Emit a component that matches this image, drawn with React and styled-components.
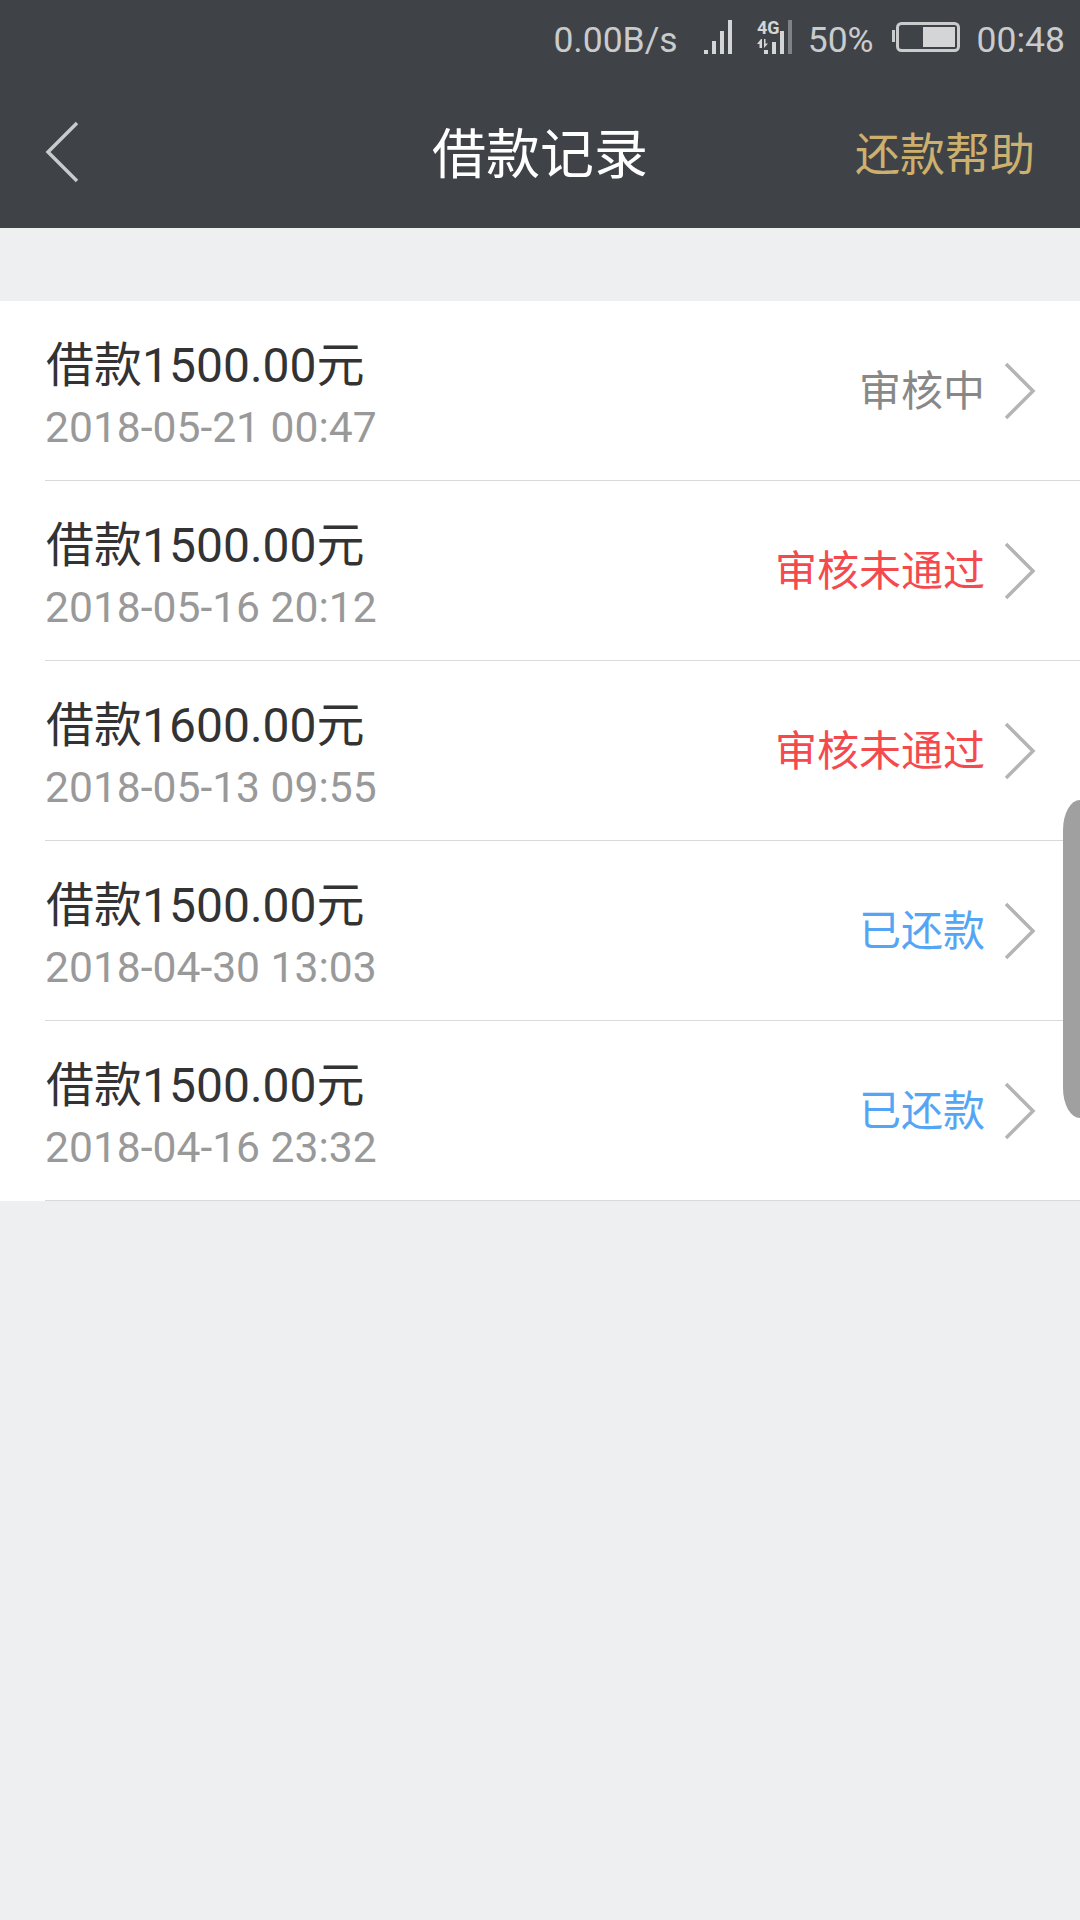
import React from "react";
import styled, { createGlobalStyle } from "styled-components";

const Global = createGlobalStyle`
  html, body { margin: 0; padding: 0; background: #eeeff1; }
  * { box-sizing: border-box; }
`;

const Page = styled.div`
  position: relative;
  width: 1080px;
  height: 1920px;
  overflow: hidden;
  background: #eeeff1;
  font-family: Roboto, "Noto Sans CJK SC", sans-serif;
`;

const Header = styled.header`
  height: 228px;
  background: #3f4347;
`;

const StatusBar = styled.div`
  height: 72px;
  padding: 20px 15px 0 0;
  display: flex;
  justify-content: flex-end;
  align-items: flex-start;
  color: #c9cbcd;
  font-size: 35.5px;
  line-height: 40px;
`;

const StatusText = styled.span`
  margin-left: ${(p) => p.$gap || 0}px;
`;

const StatusIcon = styled.svg`
  display: block;
  flex: none;
  overflow: visible;
  margin-left: ${(p) => p.$gap}px;
`;

const Nav = styled.nav`
  height: 156px;
  padding: 11px 45px 0;
  display: grid;
  grid-template-columns: 1fr auto 1fr;
  align-items: center;
`;

const BackIcon = styled.svg`
  display: block;
  margin-top: -7px;
`;

const Title = styled.h1`
  margin: 0;
  font-size: 54px;
  font-weight: 400;
  line-height: 64px;
  color: #fff;
`;

const HelpLink = styled.a`
  justify-self: end;
  font-size: 45px;
  line-height: 64px;
  color: #cdb06d;
`;

const List = styled.ul`
  list-style: none;
  margin: 73px 0 0;
  padding: 0;
  background: #fff;
`;

const Row = styled.li`
  height: 180px;
  margin-left: 45px;
  padding-right: 44px;
  border-bottom: 1px solid #d8d9da;
  display: flex;
  align-items: center;
`;

const Info = styled.div`
  flex: 1;
  margin-top: 6px;
`;

const Amount = styled.div`
  font-size: 48px;
  line-height: 60px;
  color: #333;
  margin-left: 1px;
`;

const DateText = styled.div`
  margin-top: 6px;
  font-size: 42.6px;
  line-height: 50px;
  color: #999;
`;

const STATUS = { pending: "#888", rejected: "#f44a4e", repaid: "#55a5f5" };

const Status = styled.span`
  font-size: 42px;
  line-height: 50px;
  margin: 2px 19px 0 0;
  color: ${(p) => STATUS[p.$kind]};
`;

const Chevron = styled.svg`
  display: block;
  flex: none;
`;

const EdgeHandle = styled.div`
  position: absolute;
  right: 0;
  top: 800px;
  width: 17px;
  height: 318px;
  background: #a0a0a0;
  border-radius: 17px 0 0 17px / 30px 0 0 30px;
`;

const records = [
  { amount: "借款1500.00元", date: "2018-05-21 00:47", status: "审核中", kind: "pending" },
  { amount: "借款1500.00元", date: "2018-05-16 20:12", status: "审核未通过", kind: "rejected" },
  { amount: "借款1600.00元", date: "2018-05-13 09:55", status: "审核未通过", kind: "rejected" },
  { amount: "借款1500.00元", date: "2018-04-30 13:03", status: "已还款", kind: "repaid" },
  { amount: "借款1500.00元", date: "2018-04-16 23:32", status: "已还款", kind: "repaid" },
];

const SignalIcon = () => (
  <StatusIcon $gap={26} width="29" height="34" viewBox="0 0 29 34" fill="#d3d5d7">
    <rect x="0" y="30" width="4" height="4" />
    <rect x="8" y="21" width="4" height="13" />
    <rect x="16" y="11" width="4" height="23" />
    <rect x="24" y="0" width="4" height="34" />
  </StatusIcon>
);

const MobileIcon = () => (
  <StatusIcon $gap={24} width="36" height="34" viewBox="0 0 36 34" fill="#d3d5d7">
    <text x="0" y="14" fontFamily="Roboto, sans-serif" fontSize="18" fontWeight="700" fill="#d3d5d7">4G</text>
    <path d="M4 19 L0 24 H2.5 V28 H5 V19 Z M7 19 V28 L11 23.5 H8.5 V19 Z" />
    <rect x="7" y="30" width="4" height="4" />
    <rect x="15" y="22" width="4" height="12" />
    <rect x="23" y="11" width="4" height="23" />
    <rect x="31" y="0" width="4" height="34" fill="#7f8386" />
  </StatusIcon>
);

const BatteryIcon = () => (
  <StatusIcon $gap={18} width="68" height="36" viewBox="0 0 68 36">
    <rect x="0" y="10" width="3" height="12" fill="#c9cbcd" />
    <rect x="5.5" y="3.5" width="61" height="27" rx="4" fill="none" stroke="#c9cbcd" strokeWidth="3" />
    <rect x="31" y="7" width="32" height="20" fill="#d3d5d7" />
  </StatusIcon>
);

export default function App() {
  return (
    <Page>
      <Global />
      <Header>
        <StatusBar>
          <StatusText>0.00B/s</StatusText>
          <SignalIcon />
          <MobileIcon />
          <StatusText $gap={15}>50%</StatusText>
          <BatteryIcon />
          <StatusText $gap={17}>00:48</StatusText>
        </StatusBar>
        <Nav>
          <BackIcon width="34" height="62" viewBox="0 0 34 62" fill="none">
            <path d="M32 2 L3 31 L32 60" stroke="#c8cacc" strokeWidth="3.5" />
          </BackIcon>
          <Title>借款记录</Title>
          <HelpLink>还款帮助</HelpLink>
        </Nav>
      </Header>
      <List>
        {records.map((r) => (
          <Row key={r.date}>
            <Info>
              <Amount>{r.amount}</Amount>
              <DateText>{r.date}</DateText>
            </Info>
            <Status $kind={r.kind}>{r.status}</Status>
            <Chevron width="32" height="58" viewBox="0 0 32 58" fill="none">
              <path d="M2 2 L29 29 L2 56" stroke="#b4b4b4" strokeWidth="3.5" />
            </Chevron>
          </Row>
        ))}
      </List>
      <EdgeHandle />
    </Page>
  );
}
